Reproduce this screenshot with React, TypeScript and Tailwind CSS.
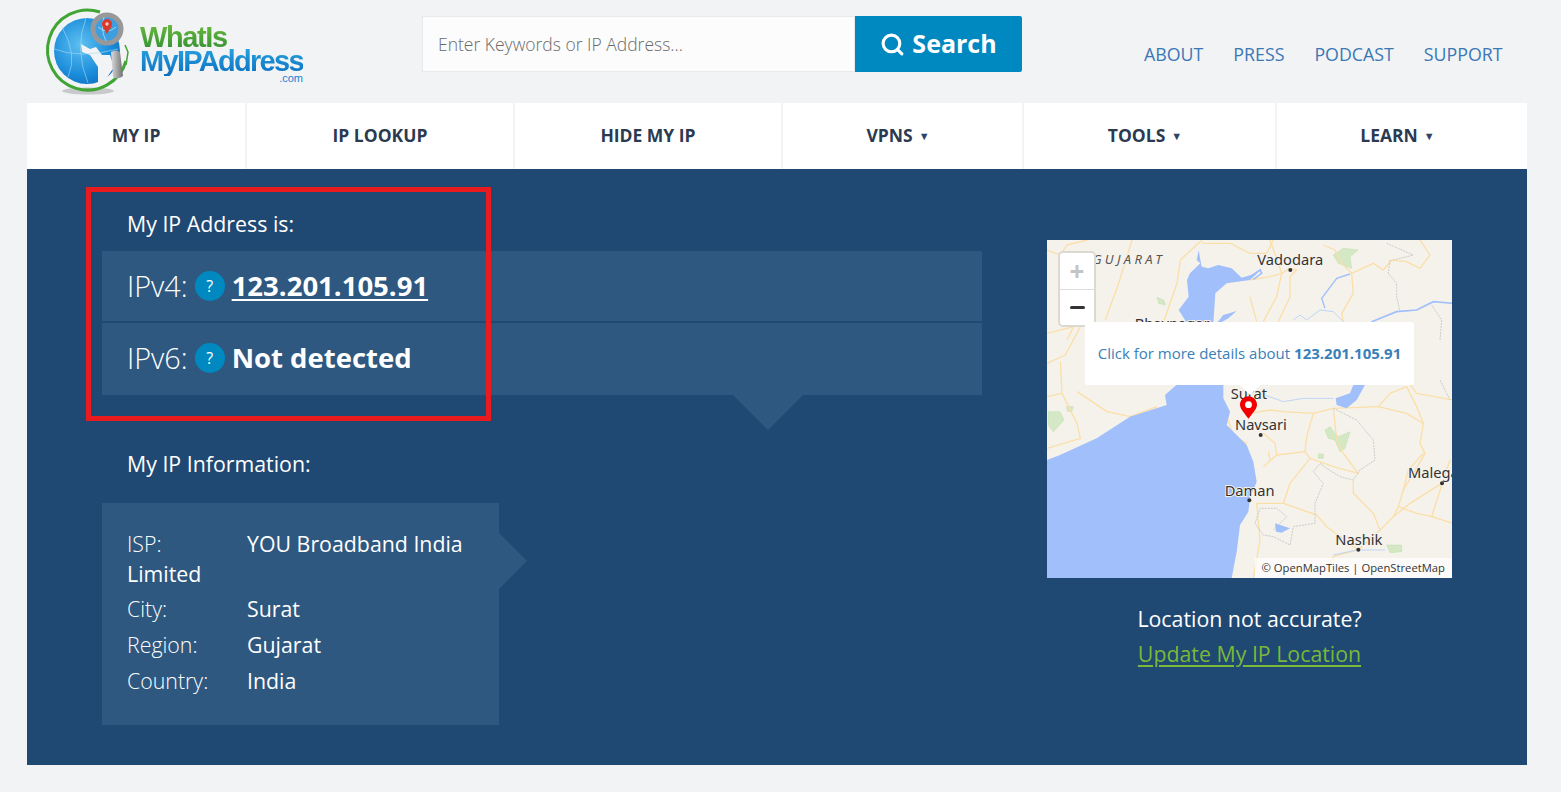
import React from 'react';
import { Search } from 'lucide-react';

const navItems = [
  { label: 'MY IP', width: 'w-[218px]' },
  { label: 'IP LOOKUP', width: 'w-[266px]' },
  { label: 'HIDE MY IP', width: 'w-[266px]' },
  { label: 'VPNS', width: 'w-[239px]', caret: true },
  { label: 'TOOLS', width: 'w-[251px]', caret: true },
  { label: 'LEARN', width: 'w-[250px]', caret: true },
];

// map shapes are traced per quadrant, each group has its own offset
const westRoads = [
  'M0 30 L40 45 L60 15 L120 0',
  'M255 0 L215 130 L175 240',
  'M465 0 L400 60 L390 130 L350 245',
  'M465 10 L550 10 L609 40',
  'M0 280 L80 260 L60 300',
  'M0 370 L55 345 L100 260',
  'M40 365 L45 460 L90 550 L100 595 L0 625',
  'M90 455 L180 515 L250 530 L330 500',
  'M0 470 L45 460',
  'M540 530 L560 590 L600 610',
];

const northEastRoads = [
  'M220 15 L255 30 L275 70 L305 100 L310 160 L275 220 L280 245',
  'M305 100 L370 70 L400 90 L425 60 L470 65 L510 85 L540 45 L510 0',
  'M0 40 L50 40 L70 0',
  'M60 0 L95 100 L80 170 L40 245',
  'M0 120 L60 110 L95 100 L120 85 L140 90 L120 110 L120 170 L85 245',
  'M0 170 L20 245',
];

const southEastRoads = [
  'M385 80 L420 40 L470 20 L500 80 L520 130 L510 190 L525 220 L490 280 L460 330 L445 380 L430 410 L390 450 L325 510',
  'M250 85 L190 100 L100 95 L60 90 L0 100',
  'M190 100 L170 170 L165 215 L180 235 L120 310 L100 370 L20 370',
  'M180 235 L250 260 L325 280 L280 220 L260 180 L250 85',
  'M40 260 L80 225 L165 215',
  'M55 215 L60 240 M40 160 L75 190 L80 225',
  'M310 300 L310 340 L370 400 L390 450',
  'M445 380 L500 400 L545 410 L580 300 L600 240',
  'M460 330 L475 270 L520 220',
  'M250 85 L385 80 L470 100 L520 130',
  'M325 510 L230 440 L200 405 L100 370',
  'M575 310 L480 370 L430 410',
  'M545 410 L609 430',
  'M320 510 L250 530 L230 594',
  'M20 370 L30 480 L10 594',
  'M470 0 L500 40 L609 60',
];

const grayBorders = [
  { offset: 'translate(630 435)', d: 'M250 85 L320 120 L370 180 L375 240 L330 270 L310 300 L270 290 L230 265 L210 250 L190 275 L220 310 L195 370 L195 430 L130 440 L120 495 L70 470 L40 465 L15 430 L30 385 L80 385 L110 410 L70 450' },
  { offset: 'translate(630 15)', d: 'M420 60 L415 100 L440 130 L440 170 L450 215' },
  { offset: 'translate(630 15)', d: 'M410 10 L490 45 L430 60' },
  { offset: 'translate(630 15)', d: 'M545 195 L575 240 L570 300' },
  { offset: 'translate(630 435)', d: 'M570 0 L600 60' },
];

const parks = [
  { offset: 'translate(630 15)', d: 'M250 45 L280 25 L325 30 L300 50 L305 85 L265 70 Z' },
  { offset: 'translate(21 15)', d: 'M330 172 L350 180 L355 195 L335 190 Z' },
  { offset: 'translate(0 0)', d: 'M25 530 L60 530 L72 555 L40 590 L25 570 Z' },
  { offset: 'translate(0 0)', d: 'M80 515 L100 515 L95 530 L82 528 Z' },
  { offset: 'translate(630 435)', d: 'M225 150 L240 140 L265 170 L300 155 L285 205 L270 215 L255 180 L235 175 Z' },
  { offset: 'translate(630 435)', d: 'M205 222 L220 222 L220 235 L205 235 Z' },
  { offset: 'translate(630 435)', d: 'M410 495 L455 495 L455 515 L420 518 Z' },
];

function MapLabel({ x, y, children }: { x: number; y: number; children: string }) {
  return (
    <text x={x} y={y} fontSize="44" fill="#333" stroke="#f5f2ec" strokeWidth="6" paintOrder="stroke" fontFamily="'Noto Sans', sans-serif">
      {children}
    </text>
  );
}

function MapDrawing() {
  return (
    <svg viewBox="21 15 1215 1014" className="block h-[338px] w-[405px]">
      <rect x="21" y="15" width="1215" height="1014" fill="#f5f2ec" />
      {parks.map((p) => (
        <path key={p.d} d={p.d} transform={p.offset} fill="#d5e8c6" stroke="#b5e0a0" strokeWidth="2" strokeDasharray="4 2" />
      ))}
      <g fill="none" stroke="#fbdfa8" strokeWidth="4" strokeLinejoin="round">
        <g transform="translate(21 15)">{westRoads.map((d) => <path key={d} d={d} />)}</g>
        <g transform="translate(630 15)">{northEastRoads.map((d) => <path key={d} d={d} />)}</g>
        <g transform="translate(630 435)">{southEastRoads.map((d) => <path key={d} d={d} />)}</g>
      </g>
      {grayBorders.map((b) => (
        <path key={b.d} d={b.d} transform={b.offset} fill="none" stroke="#cbcbc6" strokeWidth="3" strokeDasharray="6 3" />
      ))}
      <g transform="translate(630 15)" fill="none" stroke="#a0bffb">
        <path d="M300 102 L260 115 L215 175 L225 205" strokeWidth="4" />
        <path d="M130 240 L150 225 L170 240 L210 210 L250 215 L280 245" strokeWidth="3" stroke="#bcd6f5" />
        <path d="M365 245 L440 215 L500 210 L550 185 L609 190" strokeWidth="5" />
        <path d="M0 110 L30 90 L35 100 L10 118" strokeWidth="5" />
      </g>
      <g transform="translate(630 435)" fill="none">
        <path d="M30 40 L100 65 L160 55 L250 55" strokeWidth="3" stroke="#bcd6f5" />
        <path d="M250 525 L320 510 L405 510" strokeWidth="3" stroke="#bcd6f5" />
        <path d="M257 55 L300 40 L310 15 L345 15 L320 60 L290 85 L260 75 Z" fill="#a0bffb" />
        <path d="M75 430 L120 445 L95 458 L78 455 Z" fill="#a0bffb" />
      </g>
      {/* gulf and sea */}
      <path d="M476 45 L470 75 L481 85 L450 115 L441 135 L446 185 L416 225 L441 265 L520 265 L526 175 L560 145 L630 135 L668 100 L640 118 L605 128 L575 100 L535 90 L505 100 L485 95 L482 80 Z" fill="#a0bffb" />
      <path d="M530 265 L550 240 L590 228 L565 250 L530 270 Z" fill="#a0bffb" />
      <path d="M21 675 L60 660 L170 610 L270 545 L380 510 L375 480 L420 440 L550 440 L550 490 L570 530 L560 570 L590 600 L620 630 L640 680 L650 740 L630 790 L625 830 L600 870 L590 950 L575 1029 L21 1029 Z" fill="#a0bffb" />
      <text x="158" y="88" fontSize="39" fontStyle="italic" letterSpacing="10" fill="#555" stroke="#f5f2ec" strokeWidth="4" paintOrder="stroke" fontFamily="'Noto Sans', sans-serif">GUJARAT</text>
      <MapLabel x={652} y={90}>Vadodara</MapLabel>
      <circle cx="751" cy="105" r="6" fill="#333" />
      <MapLabel x={284} y={282}>Bhavnagar</MapLabel>
      <MapLabel x={572} y={492}>Surat</MapLabel>
      <MapLabel x={585} y={585}>Navsari</MapLabel>
      <circle cx="662" cy="600" r="6" fill="#333" />
      <MapLabel x={554} y={782}>Daman</MapLabel>
      <circle cx="628" cy="796" r="6" fill="#333" />
      <MapLabel x={1104} y={730}>Malegaon</MapLabel>
      <circle cx="1206" cy="745" r="6" fill="#333" />
      <MapLabel x={886} y={930}>Nashik</MapLabel>
      <circle cx="955" cy="944" r="6" fill="#333" />
    </svg>
  );
}

function HelpDot() {
  return (
    <span className="mx-[7px] flex h-[30px] w-[30px] items-center justify-center rounded-full bg-[#0089c0] text-[16px] text-white">?</span>
  );
}

function Logo() {
  return (
    <div className="flex h-[103px] w-[395px] items-start">
      <svg viewBox="0 0 100 100" className="ml-[11px] mt-[5px] h-[100px] w-[100px] shrink-0">
        <defs>
          <radialGradient id="globe" cx="40%" cy="40%" r="70%">
            <stop offset="0%" stopColor="#5fc0f0" />
            <stop offset="65%" stopColor="#1b8ddb" />
            <stop offset="100%" stopColor="#0f6cbd" />
          </radialGradient>
          <linearGradient id="handle" x1="0" y1="0" x2="1" y2="0">
            <stop offset="0%" stopColor="#dcdcdc" />
            <stop offset="100%" stopColor="#707072" />
          </linearGradient>
        </defs>
        <ellipse cx="50" cy="86" rx="26" ry="3.5" fill="#c8c9cb" />
        <path d="M62 7 A40 40 0 1 0 88 56" fill="none" stroke="#41a535" strokeWidth="3" />
        <path d="M87 40 L90 47 L88 60" fill="none" stroke="#41a535" strokeWidth="1.5" />
        <circle cx="49" cy="46" r="33" fill="url(#globe)" />
        <path d="M43 39 L52 44 L58 42 L64 50 L72 50 L76 62 L68 74 L60 78 L60 62 L52 50 L44 47 Z" fill="#f2f3f5" />
        <path d="M24 22 Q40 50 30 72 M48 13 Q36 44 50 78 M16 44 Q42 54 80 44" fill="none" stroke="#a6dcf7" strokeWidth="0.6" />
        <circle cx="69" cy="24" r="14" fill="#3d9fdf" stroke="#98989a" strokeWidth="5" />
        <path d="M60 22 Q69 30 78 22 M66 12 Q62 24 68 36" fill="none" stroke="#bde6fa" strokeWidth="0.7" />
        <path d="M73 47 Q78 44 82 47 L85 71 Q80 75 75 72 Z" fill="url(#handle)" />
        <path d="M69 14 C66 14 64 16.5 64 19 C64 22 67 25 69 29 C71 25 74 22 74 19 C74 16.5 72 14 69 14 Z" fill="#d8392b" />
        <circle cx="69" cy="19" r="1.7" fill="#f5c9c0" />
      </svg>
      <div className="ml-[2px] mt-[23px] flex w-[164px] flex-col font-['Liberation_Sans',sans-serif] font-bold">
        <span className="self-start bg-gradient-to-b from-[#6cbb3c] to-[#2f8f34] bg-clip-text text-[29px] leading-[28px] tracking-[-1.4px] text-transparent">WhatIs</span>
        <span className="-mt-[4px] self-start whitespace-nowrap bg-gradient-to-b from-[#2aa3e0] to-[#0b6fc0] bg-clip-text text-[29px] leading-[29px] tracking-[-1.7px] text-transparent">MyIPAddress</span>
        <span className="-mt-[3px] self-end pr-[1px] text-[11px] font-normal leading-[10px] text-[#1a82cf]">.com</span>
      </div>
    </div>
  );
}

export default function App() {
  return (
    <div className="h-[792px] w-[1561px] overflow-hidden bg-[#f2f3f5] font-['Open_Sans',sans-serif]">
      <div className="mx-[27px] w-[1500px]">
        <header className="flex h-[103px] items-start">
          <Logo />
          <div className="mt-[16px] flex h-[56px]">
            <div className="flex w-[433px] items-center border border-[#e8e9eb] bg-[#fcfcfc] pl-[15px] text-[17.5px] font-light text-[#6b6b6b]">
              Enter Keywords or IP Address...
            </div>
            <button className="flex w-[167px] items-center justify-center gap-[7px] rounded-r-[2px] bg-[#0089c0] text-[25px] font-bold text-white">
              <Search size={25} strokeWidth={3} />
              Search
            </button>
          </div>
          <nav className="mt-[40px] ml-[122px] flex gap-[30px] text-[17.8px] leading-[28px] text-[#3a78b5]">
            <a>ABOUT</a>
            <a>PRESS</a>
            <a>PODCAST</a>
            <a>SUPPORT</a>
          </nav>
        </header>

        <nav className="flex h-[66px] gap-[2px]">
          {navItems.map((item) => (
            <div key={item.label} className={`${item.width} flex items-center justify-center gap-[6px] bg-white pb-[2px] text-[17.5px] font-bold text-[#2b3a4f] ${item.caret ? 'pr-[9px]' : ''}`}>
              {item.label}
              {item.caret && <span className="text-[11px] leading-none text-[#2d4668]">▼</span>}
            </div>
          ))}
        </nav>

        <main className="relative flex h-[596px] bg-[#1f4873] text-white">
          <div className="ml-[75px] w-[880px] pt-[40px]">
            <h2 className="pl-[25px] text-[21.33px] leading-[30px]">My IP Address is:</h2>
            <div className="mt-[12px] flex h-[70px] items-center bg-[#2e5880] pl-[25px]">
              <span className="text-[28.8px] font-light">IPv4:</span>
              <HelpDot />
              <a className="text-[27.5px] font-bold underline decoration-2 underline-offset-[3px]">123.201.105.91</a>
            </div>
            <div className="relative mt-[2px] flex h-[72px] items-center bg-[#2e5880] pb-[2px] pl-[25px]">
              <span className="text-[28.8px] font-light">IPv6:</span>
              <HelpDot />
              <span className="text-[27.5px] font-bold">Not detected</span>
              <span className="absolute left-[631px] top-[72px] h-0 w-0 border-x-[35px] border-t-[35px] border-x-transparent border-t-[#2e5880]" />
            </div>
            <h2 className="mt-[54px] pl-[25px] text-[21.33px] leading-[30px]">My IP Information:</h2>
            <div className="relative mt-[24px] h-[222px] w-[397px] bg-[#2e5880] px-[25px] pt-[26px] text-[21.33px] leading-[30px]">
              <div className="pb-[5px]"><span className="inline-block w-[120px] font-light">ISP:</span>YOU Broadband India Limited</div>
              <div className="pb-[6px]"><span className="inline-block w-[120px] font-light">City:</span>Surat</div>
              <div className="pb-[6px]"><span className="inline-block w-[120px] font-light">Region:</span>Gujarat</div>
              <div><span className="inline-block w-[120px] font-light">Country:</span>India</div>
              <span className="absolute left-full top-[30px] h-0 w-0 border-y-[28px] border-l-[28px] border-y-transparent border-l-[#2e5880]" />
            </div>
          </div>

          <div className="ml-[65px] flex w-[405px] flex-col items-center pt-[71px]">
            <div className="relative h-[338px] w-[405px]">
              <MapDrawing />
              <div className="absolute left-[11px] top-[11px] flex h-[76px] w-[38px] flex-col rounded-[5px] border-2 border-[#dcd9d2]">
                <div className="flex h-[37px] items-center justify-center rounded-t-[3px] border-b border-[#ddd] bg-white text-[26px] font-bold leading-none text-[#c4c4c4]">+</div>
                <div className="flex flex-1 items-center justify-center rounded-b-[3px] bg-white">
                  <span className="h-[3px] w-[15px] rounded-full bg-[#333]" />
                </div>
              </div>
              <div className="absolute left-[38px] top-[82px] flex h-[63px] w-[329px] items-center justify-center rounded-[3px] bg-white text-[15px] text-[#3a7fb8]">
                <span>Click for more details about <b className="font-bold">123.201.105.91</b></span>
                <span className="absolute left-[155px] top-full h-0 w-0 border-x-[10px] border-t-[10px] border-x-transparent border-t-white" />
              </div>
              <svg viewBox="0 0 18 24" className="absolute left-[193px] top-[156px] h-[23px] w-[17px]">
                <path d="M9 0 C4 0 0 4 0 9 C0 14 6 19 9 24 C12 19 18 14 18 9 C18 4 14 0 9 0 Z" fill="#f00000" />
                <circle cx="9" cy="9" r="3.6" fill="#fff" />
              </svg>
              <div className="absolute bottom-0 right-0 bg-white/70 px-[7px] text-[11.25px] leading-[20px] text-[#333]">© OpenMapTiles | OpenStreetMap</div>
            </div>
            <p className="mt-[26px] text-[21.33px] leading-[30px]">Location not accurate?</p>
            <a className="mt-[5px] text-[21.33px] leading-[30px] text-[#7ab83a] underline underline-offset-[3px]">Update My IP Location</a>
          </div>

          {/* red annotation drawn over the page */}
          <div className="absolute left-[59px] top-[18px] h-[234px] w-[405px] border-[5px] border-[#e81c1f]" />
        </main>
      </div>
    </div>
  );
}
